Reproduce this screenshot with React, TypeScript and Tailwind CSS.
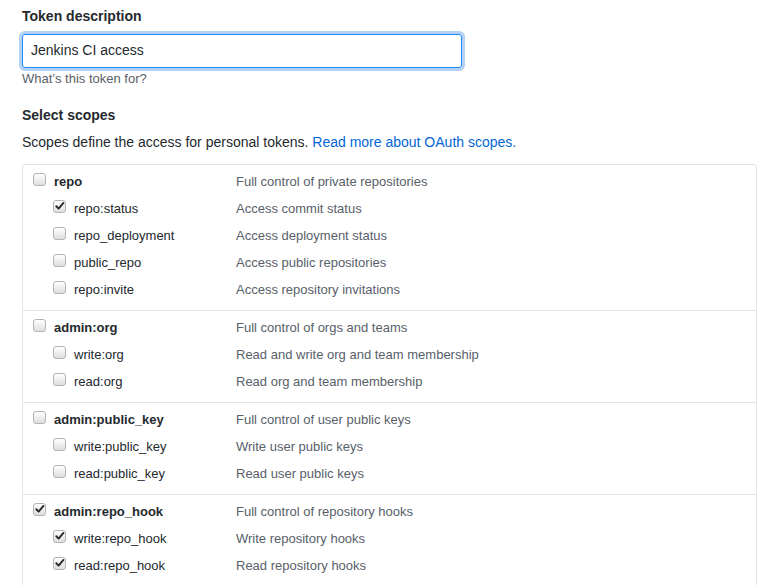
import React from "react";

type Row = { name: string; desc: string; checked: boolean; child?: boolean };

const sections: Row[][] = [
  [
    { name: "repo", desc: "Full control of private repositories", checked: false },
    { name: "repo:status", desc: "Access commit status", checked: true, child: true },
    { name: "repo_deployment", desc: "Access deployment status", checked: false, child: true },
    { name: "public_repo", desc: "Access public repositories", checked: false, child: true },
    { name: "repo:invite", desc: "Access repository invitations", checked: false, child: true },
  ],
  [
    { name: "admin:org", desc: "Full control of orgs and teams", checked: false },
    { name: "write:org", desc: "Read and write org and team membership", checked: false, child: true },
    { name: "read:org", desc: "Read org and team membership", checked: false, child: true },
  ],
  [
    { name: "admin:public_key", desc: "Full control of user public keys", checked: false },
    { name: "write:public_key", desc: "Write user public keys", checked: false, child: true },
    { name: "read:public_key", desc: "Read user public keys", checked: false, child: true },
  ],
  [
    { name: "admin:repo_hook", desc: "Full control of repository hooks", checked: true },
    { name: "write:repo_hook", desc: "Write repository hooks", checked: true, child: true },
    { name: "read:repo_hook", desc: "Read repository hooks", checked: true, child: true },
  ],
];

function Checkbox({ checked }: { checked: boolean }) {
  return (
    <span className="relative inline-block w-[13px] h-[13px] shrink-0 rounded-[3px] border border-[#b4b4b4] bg-gradient-to-b from-[#ffffff] to-[#dedede] -mt-[4px]">
      {checked && (
        <svg viewBox="0 0 13 13" className="absolute left-[0px] top-[-1px] w-[12px] h-[12px]">
          <path d="M2.5 6.8 L5 9.3 L10.2 3.2" fill="none" stroke="#2a2a2a" strokeWidth="2.1" strokeLinecap="round" strokeLinejoin="round" />
        </svg>
      )}
    </span>
  );
}

export default function App() {
  return (
    <div
      className="bg-white min-h-[585px] pl-[22px] pr-[17px] pt-[6px] text-[#24292e]"
      style={{ fontFamily: '"Liberation Sans", Arial, Helvetica, sans-serif' }}
    >
      <div className="text-[14px] font-bold leading-[20px]">Token description</div>
      <div className="mt-[8px] w-[440px] h-[34px] rounded-[3px] border border-[#2188ff] shadow-[0_0_0_3px_rgba(3,102,214,0.3)] flex items-center pl-[8px] pb-[2px] text-[14px] text-[#24292e]">
        Jenkins CI access
      </div>
      <div className="mt-[2px] text-[13px] leading-[18px] text-[#586069]">What’s this token for?</div>

      <div className="mt-[17px] text-[14px] font-bold leading-[20px]">Select scopes</div>
      <div className="mt-[7px] text-[14px] leading-[20px]">
        Scopes define the access for personal tokens.{" "}
        <span className="text-[#0366d6]">Read more about OAuth scopes.</span>
      </div>

      <div className="mt-[12px] h-[430px] border border-[#e1e4e8] rounded-[3px]">
        {sections.map((sec, i) => (
          <div key={i} className={`pt-[3px] pb-[7px] ${i > 0 ? "border-t border-[#e1e4e8]" : ""}`}>
            {sec.map((r) => (
              <div key={r.name} className="flex h-[27px] items-center text-[13px]">
                <div className={`w-[213px] flex items-center gap-[8px] ${r.child ? "pl-[30px]" : "pl-[10px]"}`}>
                  <Checkbox checked={r.checked} />
                  <span className={r.child ? "text-[#24292e]" : "font-bold text-[#24292e]"}>{r.name}</span>
                </div>
                <div className="text-[#586069]">{r.desc}</div>
              </div>
            ))}
          </div>
        ))}
      </div>
    </div>
  );
}
